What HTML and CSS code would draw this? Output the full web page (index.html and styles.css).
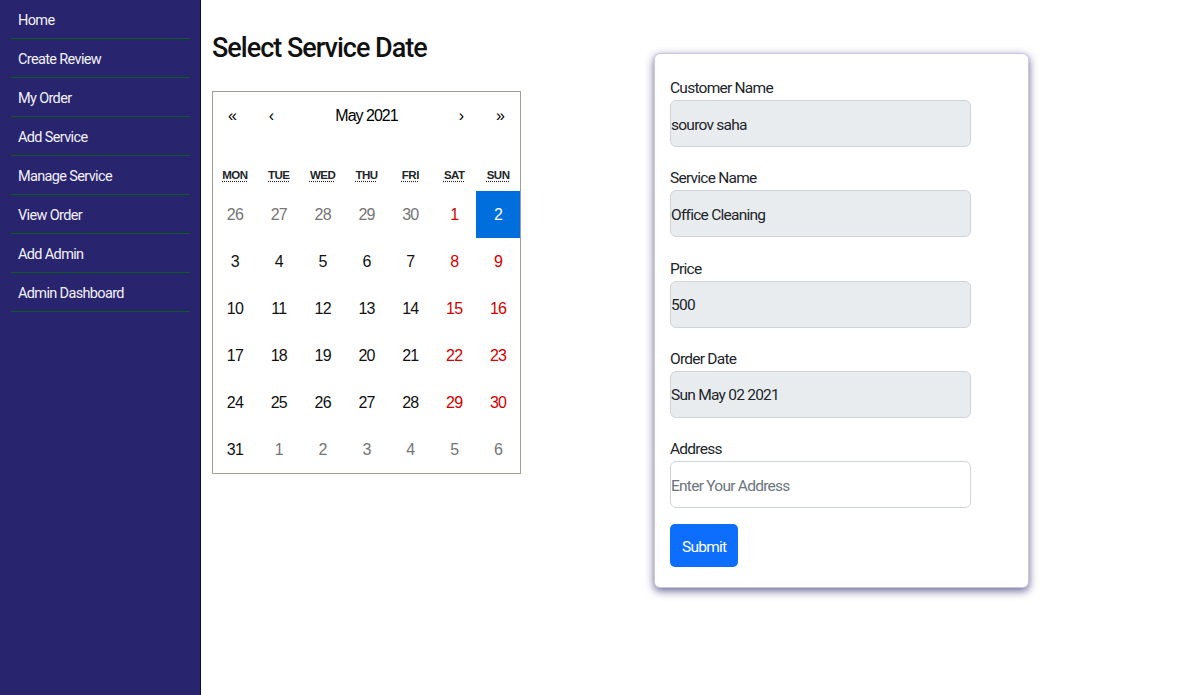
FILE: index.html
```html
<!DOCTYPE html>
<html lang="en">
<head>
<meta charset="utf-8">
<title>Select Service Date</title>
<link rel="stylesheet" href="styles.css">
</head>
<body>
<div class="layout">
  <aside class="sidebar">
    <ul class="nav">
      <li><a href="#">Home</a></li>
      <li><a href="#">Create Review</a></li>
      <li><a href="#">My Order</a></li>
      <li><a href="#">Add Service</a></li>
      <li><a href="#">Manage Service</a></li>
      <li><a href="#">View Order</a></li>
      <li><a href="#">Add Admin</a></li>
      <li><a href="#">Admin Dashboard</a></li>
    </ul>
  </aside>
  <main class="main">
    <section class="date-col">
      <h2 class="title">Select Service Date</h2>
      <div class="calendar">
        <div class="cal-nav">
          <button class="nav-btn">«</button>
          <button class="nav-btn">‹</button>
          <button class="nav-label">May 2021</button>
          <button class="nav-btn">›</button>
          <button class="nav-btn">»</button>
        </div>
        <div class="weekdays">
          <div class="wd"><abbr title="Monday">MON</abbr></div>
          <div class="wd"><abbr title="Tuesday">TUE</abbr></div>
          <div class="wd"><abbr title="Wednesday">WED</abbr></div>
          <div class="wd"><abbr title="Thursday">THU</abbr></div>
          <div class="wd"><abbr title="Friday">FRI</abbr></div>
          <div class="wd"><abbr title="Saturday">SAT</abbr></div>
          <div class="wd"><abbr title="Sunday">SUN</abbr></div>
        </div>
        <div class="days">
          <button class="day other">26</button>
          <button class="day other">27</button>
          <button class="day other">28</button>
          <button class="day other">29</button>
          <button class="day other">30</button>
          <button class="day weekend">1</button>
          <button class="day active">2</button>

          <button class="day">3</button>
          <button class="day">4</button>
          <button class="day">5</button>
          <button class="day">6</button>
          <button class="day">7</button>
          <button class="day weekend">8</button>
          <button class="day weekend">9</button>

          <button class="day">10</button>
          <button class="day">11</button>
          <button class="day">12</button>
          <button class="day">13</button>
          <button class="day">14</button>
          <button class="day weekend">15</button>
          <button class="day weekend">16</button>

          <button class="day">17</button>
          <button class="day">18</button>
          <button class="day">19</button>
          <button class="day">20</button>
          <button class="day">21</button>
          <button class="day weekend">22</button>
          <button class="day weekend">23</button>

          <button class="day">24</button>
          <button class="day">25</button>
          <button class="day">26</button>
          <button class="day">27</button>
          <button class="day">28</button>
          <button class="day weekend">29</button>
          <button class="day weekend">30</button>

          <button class="day">31</button>
          <button class="day other">1</button>
          <button class="day other">2</button>
          <button class="day other">3</button>
          <button class="day other">4</button>
          <button class="day other">5</button>
          <button class="day other">6</button>
        </div>
      </div>
    </section>
    <section class="card">
      <form class="order-form">
        <div class="group">
          <label class="label">Customer Name</label>
          <input class="field" type="text" value="sourov saha" disabled>
        </div>
        <div class="group">
          <label class="label">Service Name</label>
          <input class="field" type="text" value="Office Cleaning" disabled>
        </div>
        <div class="group">
          <label class="label">Price</label>
          <input class="field" type="text" value="500" disabled>
        </div>
        <div class="group">
          <label class="label">Order Date</label>
          <input class="field" type="text" value="Sun May 02 2021" disabled>
        </div>
        <div class="group last">
          <label class="label">Address</label>
          <input class="field editable" type="text" placeholder="Enter Your Address">
        </div>
        <button class="submit" type="button">Submit</button>
      </form>
    </section>
  </main>
</div>
</body>
</html>
```
FILE: styles.css
```css
* { box-sizing: border-box; }

html, body {
  margin: 0;
  padding: 0;
  height: 100%;
  background: #ffffff;
  font-family: "Roboto", "Liberation Sans", sans-serif;
  color: #212529;
}

.layout {
  display: flex;
  height: 695px;
}

/* Sidebar */
.sidebar {
  width: 201px;
  flex: none;
  background: #29246e;
  border-right: 1px solid #0a0a4c;
}

.nav {
  list-style: none;
  margin: 0;
  padding: 0;
}

.nav li {
  margin: 0 10px 0 11px;
  border-bottom: 1px solid #0d5a22;
}

.nav a {
  display: block;
  height: 38px;
  padding-top: 3px;
  line-height: 35px;
  padding-left: 7px;
  color: #f2f2fa;
  text-decoration: none;
  font-size: 14.5px;
  letter-spacing: -0.65px;
}

/* Main */
.main {
  flex: 1;
  display: flex;
  align-items: flex-start;
  padding: 32px 0 0 11px;
}

.date-col {
  width: 442px;
  flex: none;
}

.title {
  margin: 0 0 27px;
  font-size: 27px;
  line-height: 1.2;
  font-weight: 500;
  letter-spacing: -1px;
  color: #111;
}

/* Calendar */
.calendar {
  width: 309px;
  border: 1px solid #a0a096;
  background: #fff;
  font-family: "Liberation Sans", Arial, sans-serif;
}

.cal-nav {
  display: flex;
  height: 44px;
  margin-bottom: 16px;
}

.cal-nav button {
  border: 0;
  background: none;
  padding: 3px 0 0;
  margin: 0;
  font-family: inherit;
  color: #000;
}

.nav-btn {
  width: 39px;
  font-size: 16px;
}

.nav-label {
  flex: 1;
  font-size: 16px;
  letter-spacing: -1px;
}

.weekdays {
  display: grid;
  grid-template-columns: repeat(7, 1fr);
  height: 39px;
  padding-top: 6px;
  align-items: center;
}

.wd {
  text-align: center;
  font-size: 11.5px;
  font-weight: 700;
  letter-spacing: -0.5px;
}

.wd abbr {
  text-decoration: underline dotted;
  text-underline-offset: 2px;
}

.days {
  display: grid;
  grid-template-columns: repeat(7, 1fr);
  grid-auto-rows: 47px;
}

.day {
  border: 0;
  background: none;
  padding: 0;
  margin: 0;
  font-family: inherit;
  font-size: 16px;
  letter-spacing: -0.8px;
  color: #111;
  text-align: center;
}

.day.weekend { color: #d10000; }
.day.other { color: #757575; }
.day.active { background: #006edc; color: #fff; }

/* Card */
.card {
  width: 375px;
  flex: none;
  margin-top: 21px;
  background: #fff;
  border: 1px solid rgba(40, 34, 110, 0.25);
  border-radius: 6px;
  box-shadow: 0 3px 9px rgba(42, 36, 111, 0.7);
  padding: 22px 16px 20px 15px;
}

.group {
  display: flex;
  flex-direction: column;
  margin-bottom: 19.25px;
}

.group.last { margin-bottom: 16px; }

.label {
  display: block;
  height: 24px;
  line-height: 24px;
  font-size: 15.5px;
  letter-spacing: -0.75px;
  color: #212529;
}

.field {
  width: 301px;
  height: 47px;
  padding: 2px 0 0;
  margin: 0;
  border: 1px solid #ced4da;
  border-radius: 6px;
  background: #e9ecef;
  font-family: inherit;
  font-size: 15.5px;
  letter-spacing: -0.75px;
  color: #212529;
}

.field.editable { background: #fff; }
.field::placeholder { color: #6c757d; }

.submit {
  display: block;
  height: 43px;
  padding: 2px 12px 0;
  border: 0;
  border-radius: 5px;
  background: #0d6efd;
  color: #fff;
  font-family: inherit;
  font-size: 15.5px;
  letter-spacing: -0.75px;
}
```
